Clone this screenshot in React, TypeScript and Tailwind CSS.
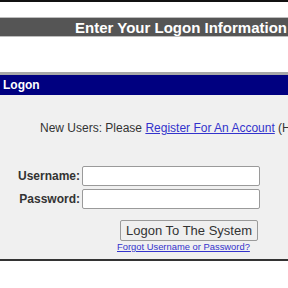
export default function App() {
  return (
    <div className="w-[288px] h-[288px] overflow-hidden bg-white font-['Liberation_Sans',Arial,sans-serif]">
      <div className="h-[2px] bg-[#111]" />
      <div className="mt-[15px] h-[20px] bg-[#555555] border-y border-[#bdbdbd] flex items-center justify-end pr-[1px]">
        <span className="text-white font-bold text-[15px] leading-none whitespace-nowrap">Enter Your Logon Information</span>
      </div>
      <div className="mt-[35px] h-[3px] bg-[#a8a8a8]" />
      <div className="h-[20px] bg-[#000080] flex items-center pl-[3px]">
        <span className="text-white font-bold text-[12px] leading-none">Logon</span>
      </div>
      <div className="h-[166px] bg-[#f0f0f0] border-b-2 border-[#333] flex flex-col">
        <div className="mt-[26px] pl-[40px] text-[12px] leading-[14px] text-[#333] whitespace-nowrap">
          New Users: Please <a href="#" className="text-[#3333cc] underline">Register For An Account</a> (Help)
        </div>
        <div className="mt-[31px] flex flex-col gap-[3px]">
          <div className="flex items-center">
            <label className="w-[80px] text-right text-[12px] font-bold text-[#333]">Username:</label>
            <input type="text" className="ml-[2px] w-[178px] h-[20px] bg-white border border-[#9a9a9a] rounded-[2px]" />
          </div>
          <div className="flex items-center">
            <label className="w-[80px] text-right text-[12px] font-bold text-[#333]">Password:</label>
            <input type="password" className="ml-[2px] w-[178px] h-[20px] bg-white border border-[#9a9a9a] rounded-[2px]" />
          </div>
        </div>
        <div className="mt-[11px] flex flex-col items-start pl-[117px]">
          <button className="ml-[3px] w-[138px] h-[21px] bg-[#efefef] border border-[#9a9a9a] rounded-[2px] text-[13px] leading-none text-[#333]">
            Logon To The System
          </button>
          <a href="#" className="mt-[1px] text-[9.4px] leading-[10px] text-[#3333cc] underline whitespace-nowrap">Forgot Username or Password?</a>
        </div>
      </div>
    </div>
  );
}
